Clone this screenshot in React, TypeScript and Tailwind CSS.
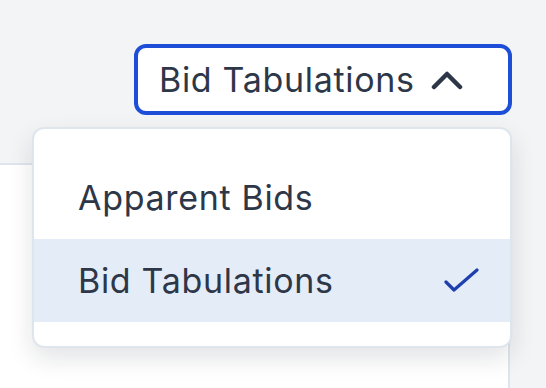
import { useState } from 'react';

const OPTIONS = ['Apparent Bids', 'Bid Tabulations'];

function ChevronUp() {
  return (
    <svg width="32" height="20" viewBox="0 0 32 20" fill="none" className="text-[#2d3748]">
      <path d="M3 17 L16 4 L29 17" stroke="currentColor" strokeWidth="4.5" strokeLinecap="round" strokeLinejoin="round" />
    </svg>
  );
}

function Check() {
  return (
    <svg width="36" height="28" viewBox="0 0 36 28" fill="none" className="text-[#1e3fae]">
      <path d="M2 15 L10 23 L33 3" stroke="currentColor" strokeWidth="3.2" strokeLinecap="round" strokeLinejoin="round" />
    </svg>
  );
}

export default function App() {
  const [selected] = useState('Bid Tabulations');

  return (
    <div
      className="relative h-[388px] w-[546px] overflow-hidden bg-[#f3f4f6]"
      style={{ fontFamily: 'Inter, "Noto Sans", sans-serif' }}
    >
      <div className="flex justify-end pr-[34px] pt-[44px]">
        <button
          type="button"
          className="flex h-[71px] w-[378px] items-center gap-[16px] rounded-[12px] border-4 border-[#1d4ed8] bg-white pl-[21px] text-[34px] tracking-[0.02em] text-[#2d3748]"
        >
          <span>Bid Tabulations</span>
          <ChevronUp />
        </button>
      </div>

      <div className="mt-[48px] h-[300px] w-[510px] rounded-tr-[12px] border-r-2 border-t-2 border-[#dfe5ec] bg-white" />

      <div className="absolute left-[32px] top-[127px] w-[480px] rounded-[12px] border-2 border-[#dfe5ec] bg-white pb-[24px] pt-[27px] shadow-[0_10px_24px_rgba(15,23,42,0.12)]">
        {OPTIONS.map((opt) => (
          <div
            key={opt}
            className={
              opt === selected
                ? 'flex h-[83px] items-center justify-between bg-[#e4ecf8] pl-[44px] pr-[30px] text-[34px] tracking-[0.02em] text-[#2d3748]'
                : 'flex h-[83px] items-center justify-between pl-[44px] pr-[30px] text-[34px] tracking-[0.02em] text-[#2d3748]'
            }
          >
            <span>{opt}</span>
            {opt === selected && <Check />}
          </div>
        ))}
      </div>
    </div>
  );
}
